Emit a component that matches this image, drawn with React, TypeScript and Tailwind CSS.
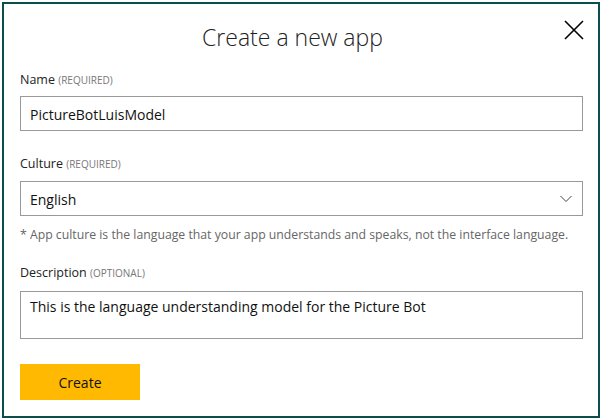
import React from "react";

export default function App() {
  const font = { fontFamily: '"Open Sans", "Noto Sans", sans-serif' };
  return (
    <div className="w-[603px] h-[420px] bg-white p-[2px]" style={font}>
      <div className="w-[598px] h-[416px] border-2 border-[#0b4e4d] bg-white pl-[16px] pr-[15px] relative">
        <div className="h-[68px] flex items-center justify-center pb-[2px] pr-[18px]">
          <h1 className="text-[23px] font-light text-[#222]">Create a new app</h1>
        </div>
        <button className="absolute right-[12px] top-[14px] w-[24px] h-[24px] flex items-center justify-center text-black">
          <svg width="20" height="20" viewBox="0 0 20 20" fill="none" stroke="currentColor" strokeWidth="1.6">
            <path d="M1 1 L19 19 M19 1 L1 19" />
          </svg>
        </button>

        <div className="text-[12.5px] text-[#222] leading-[16px] h-[24px]">
          Name <span className="text-[10px] text-[#777]">(REQUIRED)</span>
        </div>
        <div className="h-[35px] border border-[#999] flex items-center px-[9px] pt-[2px] text-[14px] text-[#111]">
          PictureBotLuisModel
        </div>

        <div className="text-[12.5px] text-[#222] leading-[16px] h-[25px] mt-[25px]">
          Culture <span className="text-[10px] text-[#777]">(REQUIRED)</span>
        </div>
        <div className="h-[35px] border border-[#999] flex items-center justify-between pl-[9px] pr-[10px] pt-[1px] text-[14px] text-[#111]">
          <span>English</span>
          <svg width="12" height="8" viewBox="0 0 12 8" fill="none" stroke="#444" strokeWidth="1">
            <path d="M0.5 1 L6 6.5 L11.5 1" />
          </svg>
        </div>
        <div className="text-[12.25px] text-[#666] mt-[11px] leading-[16px] whitespace-nowrap">
          * App culture is the language that your app understands and speaks, not the interface language.
        </div>

        <div className="text-[12.5px] text-[#222] leading-[16px] h-[26px] mt-[22px]">
          Description <span className="text-[10px] text-[#777]">(OPTIONAL)</span>
        </div>
        <div className="h-[48px] border border-[#999] px-[9px] pt-[5px] text-[14px] text-[#111] leading-[20px]">
          This is the language understanding model for the Picture Bot
        </div>

        <button className="mt-[25px] w-[120px] h-[36px] bg-[#ffb900] text-[14px] text-[#111] flex items-center justify-center">
          Create
        </button>
      </div>
    </div>
  );
}
